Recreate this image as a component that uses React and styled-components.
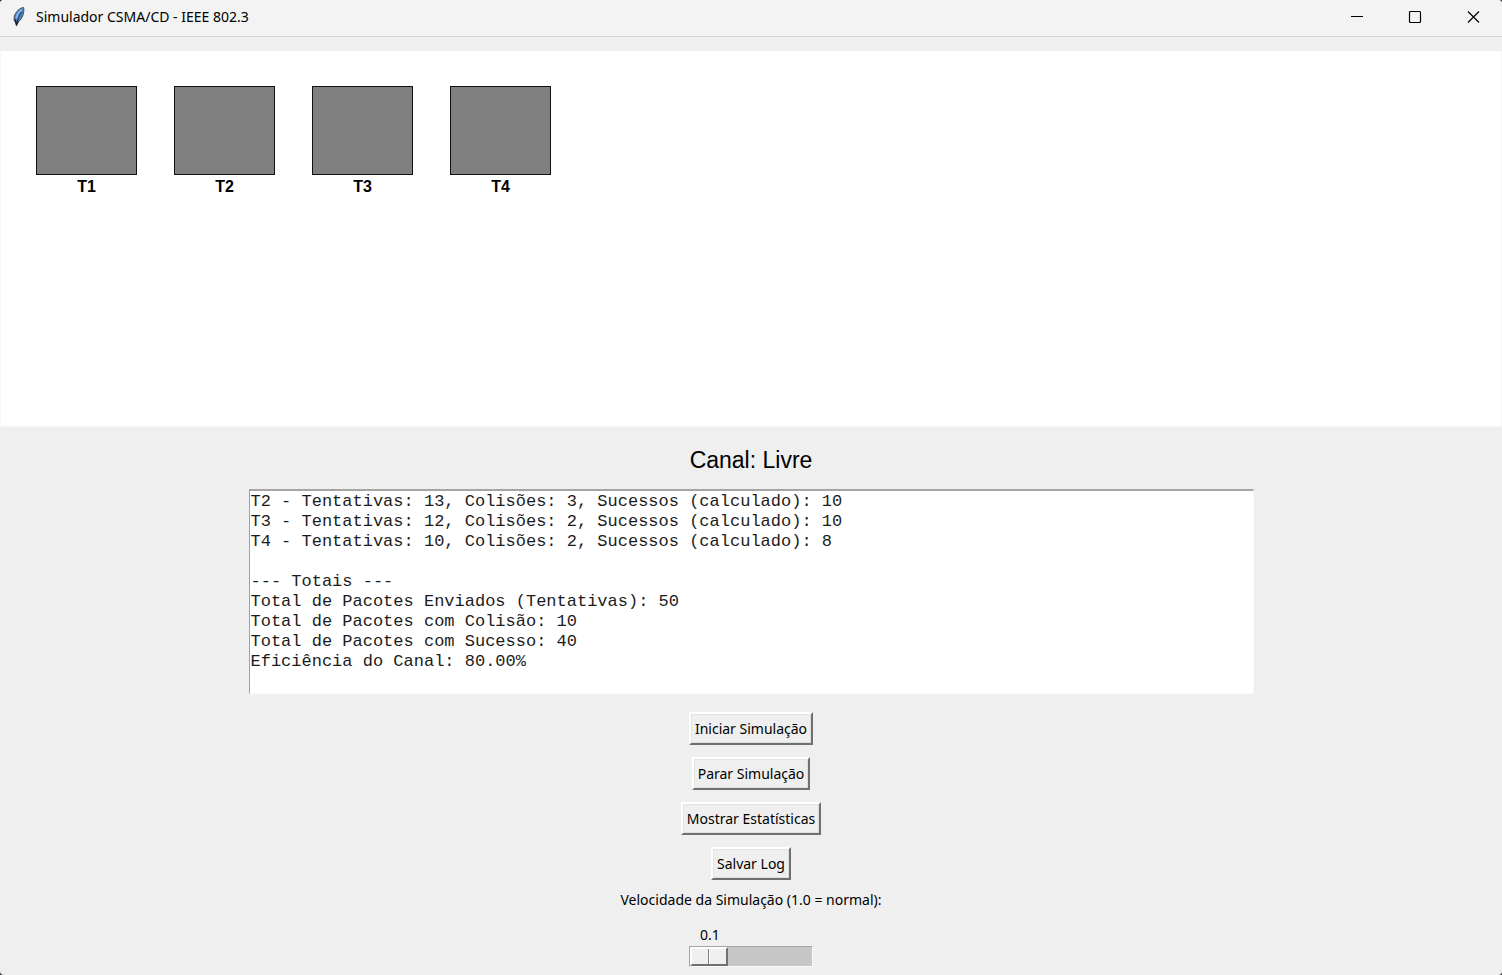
import React, { useState } from "react";
import styled, { createGlobalStyle } from "styled-components";

const GlobalStyle = createGlobalStyle`
  *, *::before, *::after { box-sizing: border-box; }
  body { margin: 0; background: #3a3a3a; }
`;

const Window = styled.div`
  display: flex;
  flex-direction: column;
  min-height: 100vh;
  background: #efefef;
  border-radius: 4px;
  overflow: hidden;
  color: #000;
  font-family: "Noto Sans", "Open Sans", sans-serif;
  font-size: 14px;
  line-height: 20px;
`;

const TitleBar = styled.header`
  display: flex;
  align-items: center;
  height: 37px;
  padding: 0 0 3px 12px;
  background: #f3f3f3;
  border-bottom: 1px solid #d6d6d6;
`;

const Title = styled.h1`
  flex: 1;
  margin: 0 0 0 10px;
  font-size: 14px;
  font-weight: 400;
  line-height: 20px;
`;

const CaptionButton = styled.button`
  display: flex;
  align-items: center;
  justify-content: center;
  width: 58px;
  height: 33px;
  padding: 0;
  border: 0;
  background: transparent;
`;

const Canvas = styled.section`
  display: flex;
  gap: 37px;
  height: 376px;
  margin-top: 14px;
  padding: 35px 35px 0;
  background: #fff;
  border: 1px solid #f6f6f6;
  border-top: 0;
`;

const Terminal = styled.figure`
  width: 101px;
  margin: 0;
`;

const TerminalBox = styled.div`
  height: 89px;
  background: #808080;
  border: 1px solid #111;
`;

const TerminalName = styled.figcaption`
  margin-top: 2px;
  text-align: center;
  font-family: "Liberation Sans", Arial, sans-serif;
  font-size: 16px;
  font-weight: 700;
  line-height: 20px;
`;

const Panel = styled.main`
  display: flex;
  flex-direction: column;
  align-items: center;
  padding: 18px 0 8px;
`;

const ChannelStatus = styled.p`
  margin: 0 0 14px;
  font-family: "Liberation Sans", Arial, sans-serif;
  font-size: 23px;
  line-height: 30px;
`;

const Log = styled.textarea`
  display: block;
  width: 1005px;
  max-width: 100%;
  height: 205px;
  margin: 0 0 18px;
  padding: 1px;
  resize: none;
  overflow: hidden;
  outline: 0;
  color: #1c1c1c;
  background: #fff;
  border: 1px solid #fafafa;
  border-top: 2px solid #a5a5a5;
  border-left: 1px solid #a0a0a0;
  border-radius: 0;
  font-family: "Liberation Mono", "Courier New", monospace;
  font-size: 17px;
  line-height: 20px;
`;

const Actions = styled.div`
  display: flex;
  flex-direction: column;
  align-items: center;
  gap: 12px;
`;

const ActionButton = styled.button`
  height: 33px;
  padding: 0 4px;
  color: #000;
  background: #efefef;
  border: 2px solid;
  border-color: #fff #707070 #707070 #fff;
  box-shadow: inset 1px 1px #e3e3e3, inset -1px -1px #dedede;
  font: inherit;
`;

const Speed = styled.div`
  display: flex;
  flex-direction: column;
  align-items: center;
  margin-top: 10px;
`;

const SpeedScale = styled.div`
  width: 124px;
  margin-top: 15px;
`;

const SpeedValue = styled.output`
  display: block;
  width: 42px;
  text-align: center;
`;

const SpeedSlider = styled.input`
  appearance: none;
  display: block;
  width: 100%;
  height: 21px;
  margin: 1px 0 0;
  background: #c6c6c6;
  border: 1px solid;
  border-color: #a5a5a5 #fafafa #fafafa #a5a5a5;

  &::-webkit-slider-thumb {
    appearance: none;
    width: 38px;
    height: 19px;
    border: 2px solid;
    border-color: #fff #707070 #707070 #fff;
    background: linear-gradient(
      to right,
      #efefef 16px,
      #808080 16px 17px,
      #fff 17px 18px,
      #efefef 18px
    );
  }
`;

const LOG_TEXT = `T2 - Tentativas: 13, Colisões: 3, Sucessos (calculado): 10
T3 - Tentativas: 12, Colisões: 2, Sucessos (calculado): 10
T4 - Tentativas: 10, Colisões: 2, Sucessos (calculado): 8

--- Totais ---
Total de Pacotes Enviados (Tentativas): 50
Total de Pacotes com Colisão: 10
Total de Pacotes com Sucesso: 40
Eficiência do Canal: 80.00%
`;

const TERMINALS = ["T1", "T2", "T3", "T4"];
const ACTIONS = ["Iniciar Simulação", "Parar Simulação", "Mostrar Estatísticas", "Salvar Log"];

function FeatherIcon() {
  return (
    <svg width="14" height="22" viewBox="0 0 14 22" aria-hidden="true">
      <path d="M11.5 1.5C8 1.8 3.5 5.500 2.200 11c-.5 2.300 0 4 1.300 5.500l1 3.500.8-3.500c3-1.500 5.500-5.500 6.200-9.500.4-2.300.5-3.800 0-5.500z" fill="#4a80c4" stroke="#4a4e52" strokeWidth="1" />
      <path d="M10 3.500C7 5.500 5 8.500 4.500 12.500" fill="none" stroke="#85b5ef" strokeWidth="2" />
      <path d="M9.500 6C7 9.500 5 14 4.500 20" fill="none" stroke="#24354c" strokeWidth="1" />
      <path d="M3 13.500l1.500 4.500 2-2.500" fill="none" stroke="#222" strokeWidth="1.500" />
    </svg>
  );
}

function CaptionIcon({ children }) {
  return (
    <svg width="14" height="14" viewBox="0 0 14 14" fill="none" stroke="#000" aria-hidden="true">
      {children}
    </svg>
  );
}

export default function App() {
  const [speed, setSpeed] = useState(0.1);

  return (
    <>
      <GlobalStyle />
      <Window>
        <TitleBar>
          <FeatherIcon />
          <Title>Simulador CSMA/CD - IEEE 802.3</Title>
          <CaptionButton type="button" aria-label="Minimizar">
            <CaptionIcon><path d="M1 6.500h12" /></CaptionIcon>
          </CaptionButton>
          <CaptionButton type="button" aria-label="Maximizar">
            <CaptionIcon><rect x="1.500" y="1.500" width="11" height="11" rx="1" strokeWidth="1.200" /></CaptionIcon>
          </CaptionButton>
          <CaptionButton type="button" aria-label="Fechar">
            <CaptionIcon><path d="M2 1.500l11 11M13 1.500l-11 11" strokeWidth="1.200" /></CaptionIcon>
          </CaptionButton>
        </TitleBar>

        <Canvas aria-label="Terminais">
          {TERMINALS.map((name) => (
            <Terminal key={name}>
              <TerminalBox />
              <TerminalName>{name}</TerminalName>
            </Terminal>
          ))}
        </Canvas>

        <Panel>
          <ChannelStatus>Canal: Livre</ChannelStatus>
          <Log aria-label="Log da simulação" readOnly spellCheck={false} value={LOG_TEXT} />
          <Actions>
            {ACTIONS.map((label) => (
              <ActionButton type="button" key={label}>{label}</ActionButton>
            ))}
          </Actions>
          <Speed>
            <label htmlFor="speed">Velocidade da Simulação (1.0 = normal):</label>
            <SpeedScale>
              <SpeedValue htmlFor="speed">{speed.toFixed(1)}</SpeedValue>
              <SpeedSlider
                id="speed"
                type="range"
                min="0.1"
                max="5"
                step="0.1"
                value={speed}
                onChange={(event) => setSpeed(Number(event.target.value))}
              />
            </SpeedScale>
          </Speed>
        </Panel>
      </Window>
    </>
  );
}
